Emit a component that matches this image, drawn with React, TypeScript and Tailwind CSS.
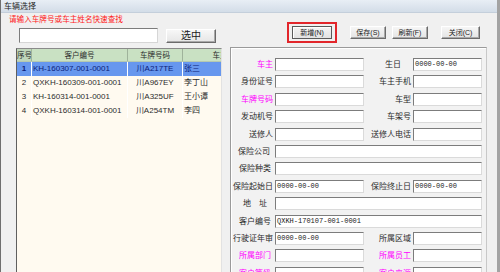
import React from "react";

const rows = [
  ["1", "KH-160307-001-0001", "川A217TE", "张三"],
  ["2", "QXKH-160309-001-0001", "川A967EY", "李丁山"],
  ["3", "KH-160314-001-0001", "川A325UF", "王小谭"],
  ["4", "QXKH-160314-001-0001", "川A254TM", "李四"],
];

function Field({ text, mono }: { text?: string; mono?: boolean }) {
  return (
    <div className="h-[13px] bg-white border border-t-[#7c7c7c] border-l-[#7c7c7c] border-r-[#dadada] border-b-[#dadada] overflow-hidden">
      {text ? (
        <span className="block pl-[1px] text-[7px] leading-[11px] text-[#222] font-['Liberation_Mono',monospace]">
          {text}
        </span>
      ) : null}
    </div>
  );
}

function Label({ text, magenta, extra }: { text: string; magenta?: boolean; extra?: string }) {
  return (
    <div
      className={
        "h-[13px] text-right whitespace-nowrap text-[8px] leading-[13px] " +
        (magenta ? "text-[#ff00ff] " : "text-[#2a2a2a] ") +
        (extra ?? "pr-[2px]")
      }
    >
      {text}
    </div>
  );
}

function Btn({ text, w }: { text: string; w: string }) {
  return (
    <div
      className={
        "h-[13px] flex items-center justify-center text-[7px] leading-none text-[#222] bg-linear-to-b from-[#f6f6f6] to-[#e4e4e4] border border-t-[#ffffff] border-l-[#ffffff] border-r-[#6b6b6b] border-b-[#6b6b6b] shadow-[inset_-1px_-1px_0_#a9a9a9] " +
        w
      }
    >
      {text}
    </div>
  );
}

export default function App() {
  return (
    <div className="w-[500px] h-[272px] overflow-hidden flex flex-col bg-[#f0f0f0] border-l border-l-[#6f6f6f] border-r-[3px] border-r-[#a3a3a3] font-['Liberation_Sans','Noto_Sans_CJK_SC',sans-serif]">
      {/* title bar */}
      <div className="h-[13px] shrink-0 pl-[3px] text-[8px] leading-[13px] text-[#1e1e1e] bg-linear-to-b from-[#e8eef5] to-[#d3dde8] border-b border-b-[#c4cfdb]">
        车辆选择
      </div>

      <div className="flex flex-1 min-h-0">
        {/* left column */}
        <div className="w-[228px] shrink-0 flex flex-col">
          <div className="h-[14px] pl-[8px] text-[7.6px] leading-[14px] text-[#ff1a1a]">
            请输入车牌号或车主姓名快速查找
          </div>
          <div className="flex items-start mt-[1px] h-[15px]">
            <div className="ml-[18px] w-[139px] h-[15px] bg-white border border-t-[#7c7c7c] border-l-[#7c7c7c] border-r-[#d6d6d6] border-b-[#d6d6d6]" />
            <div className="ml-[8px] mt-[1px] w-[50px] h-[14px] flex items-center justify-center text-[10px] leading-none text-[#1a1a1a] bg-linear-to-b from-[#f7f7f7] to-[#e6e6e6] border border-t-[#ffffff] border-l-[#ffffff] border-r-[#6b6b6b] border-b-[#6b6b6b] shadow-[inset_-1px_-1px_0_#a9a9a9]">
              选中
            </div>
          </div>
          {/* table */}
          <div className="ml-[15px] mt-[5px] w-[206px] flex-1 overflow-hidden bg-[#fffaf0] border-t border-t-[#8a8a8a] border-l border-l-[#5f5f5f] border-r border-r-[#e2e2e2]">
            <div className="w-[260px]">
              <div className="flex h-[13px] bg-[#c9e1c3] text-[7.5px] leading-[13px] text-[#2b2b2b] border-b border-b-[#b5c9b0]">
                <div className="w-[15px] shrink-0 text-center bg-[#bfd6ba] border-r border-r-[#9fb39b] overflow-hidden whitespace-nowrap">序号</div>
                <div className="w-[96px] shrink-0 text-center border-r border-r-[#9fb39b]">客户编号</div>
                <div className="w-[55px] shrink-0 text-center border-r border-r-[#9fb39b]">车牌号码</div>
                <div className="w-[74px] shrink-0 text-center">车主</div>
              </div>
              {rows.map((r, i) => {
                const sel = i === 0;
                return (
                  <div
                    key={r[0]}
                    className={
                      "flex h-[14px] text-[8px] leading-[14px] whitespace-nowrap " +
                      (sel ? "bg-[#6797ee] text-[#0b1d7a]" : "text-[#2d2d2d]")
                    }
                  >
                    <div className={"w-[15px] shrink-0 text-center border-r border-r-white " + (sel ? "font-bold" : "")}>{r[0]}</div>
                    <div className="w-[96px] shrink-0 pl-[1px] border-r border-r-white">{r[1]}</div>
                    <div className="w-[55px] shrink-0 text-center border-r border-r-white">{r[2]}</div>
                    <div className="w-[74px] shrink-0 pl-[1px]">{r[3]}</div>
                  </div>
                );
              })}
            </div>
          </div>
        </div>

        {/* right column */}
        <div className="flex-1 flex flex-col">
          <div className="flex items-center mt-[9px] h-[21px]">
            <div className="ml-[58px] w-[50px] h-[21px] border-2 border-[#e2262b] flex items-center justify-center">
              <div className="w-[40px] h-[13px] flex items-center justify-center text-[7px] leading-none text-[#222] bg-linear-to-b from-[#f4f4f4] to-[#e2e2e2] border border-[#5a5a5a] shadow-[inset_1px_1px_0_#ffffff]">
                新增(N)
              </div>
            </div>
            <div className="ml-[13px]"><Btn text="保存(S)" w="w-[36px]" /></div>
            <div className="ml-[6px]"><Btn text="刷新(F)" w="w-[36px]" /></div>
            <div className="ml-[13px]"><Btn text="关闭(C)" w="w-[39px]" /></div>
          </div>

          <div className="ml-[1px] mt-[4px] w-[257px] flex-1 bg-[#f2f2f2] border border-t-[#9a9a9a] border-l-[#9a9a9a] border-r-[#c8c8c8] border-b-[#c8c8c8] shadow-[inset_1px_1px_0_#ffffff] pt-[10px]">
            <div className="grid grid-cols-[44px_89px_49px_69px] auto-rows-[13px] gap-y-[4.4px]">
              <Label text="车主" magenta />
              <Field />
              <Label text="生日" extra="pr-[12px]" />
              <Field text="0000-00-00" />

              <Label text="身份证号" />
              <Field />
              <Label text="车主手机" />
              <Field />

              <Label text="车牌号码" magenta />
              <Field />
              <Label text="车型" />
              <Field />

              <Label text="发动机号" />
              <Field />
              <Label text="车架号" />
              <Field />

              <Label text="送修人" />
              <Field />
              <Label text="送修人电话" />
              <Field />

              <Label text="保险公司" extra="pr-[5px]" />
              <div className="col-span-3"><Field /></div>

              <Label text="保险种类" extra="pr-[4px]" />
              <div className="col-span-3"><Field /></div>

              <Label text="保险起始日" />
              <Field text="0000-00-00" />
              <Label text="保险终止日" />
              <Field text="0000-00-00" />

              <Label text="地　址" extra="pr-[8px]" />
              <div className="col-span-3"><Field /></div>

              <Label text="客户编号" extra="pr-[4px]" />
              <div className="col-span-3"><Field text="QXKH-170107-001-0001" /></div>

              <Label text="行驶证年审" />
              <Field text="0000-00-00" />
              <Label text="所属区域" />
              <Field />

              <Label text="所属部门" magenta extra="pr-[4px]" />
              <Field />
              <Label text="所属员工" magenta />
              <Field />

              <Label text="客户等级" magenta extra="pr-[4px]" />
              <Field />
              <Label text="客户来源" magenta />
              <Field />
            </div>
          </div>
        </div>
      </div>
    </div>
  );
}
